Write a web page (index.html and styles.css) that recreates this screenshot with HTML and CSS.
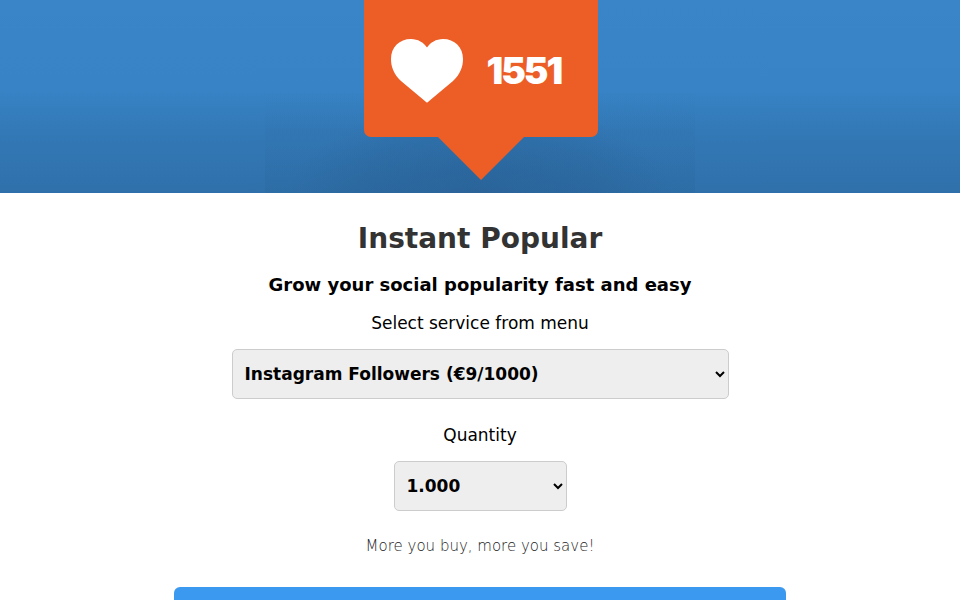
FILE: index.html
```html
<!DOCTYPE html>
<html lang="en">
<head>
<meta charset="utf-8">
<title>Instant Popular</title>
<link rel="stylesheet" href="styles.css">
</head>
<body>
<header class="hero">
  <div class="badge">
    <svg class="heart" viewBox="0 0 72 64" width="72" height="64" aria-hidden="true">
      <path d="M36 63.500 C35.500 63.500 35 63 34.500 62.500 L10 42 C3 35.500 0 28 0 20 C0 8 8.500 0 20 0 C27 0 32.500 3.500 36 8.500 C39.500 3.500 45 0 52 0 C63.500 0 72 8 72 20 C72 28 69 35.500 62 42 L37.500 62.500 C37 63 36.500 63.500 36 63.500 Z" fill="#fff"/>
    </svg>
    <span class="count">1551</span>
  </div>
  <svg class="tail" viewBox="0 0 86 43" width="86" height="43" aria-hidden="true">
    <path d="M0 0 H86 L43 43 Z" fill="#ed5e27"/>
  </svg>
</header>
<main class="content">
  <h1 class="title">Instant Popular</h1>
  <h2 class="subtitle">Grow your social popularity fast and easy</h2>
  <p class="label">Select service from menu</p>
  <select class="picker picker-service" aria-label="Service">
    <option>Instagram Followers (€9/1000)</option>
  </select>
  <p class="label label-quantity">Quantity</p>
  <select class="picker picker-quantity" aria-label="Quantity">
    <option>1.000</option>
    <option>10.000</option>
  </select>
  <p class="note">More you buy, more you save!</p>
  <button class="action" type="button" aria-label="Continue"></button>
</main>
</body>
</html>
```
FILE: styles.css
```css
html, body {
  margin: 0;
  height: 600px;
  overflow: hidden;
  background: #fff;
}
body {
  font-family: "DejaVu Sans", sans-serif;
  color: #000;
}
.hero {
  height: 193px;
  display: flex;
  flex-direction: column;
  align-items: center;
  background:
    radial-gradient(ellipse 190px 90px at 50% 100%, rgba(38, 90, 140, .5) 0%, rgba(38, 90, 140, .25) 65%, rgba(38, 90, 140, 0) 100%),
    linear-gradient(rgba(36, 90, 140, 0), rgba(36, 90, 140, .14)) center bottom / 430px 103px no-repeat,
    linear-gradient(#3985c7 0, #3783c5 90px, #3379b7 130px, #2f70aa 193px);
}
.badge {
  width: 234px;
  height: 137px;
  margin-left: 1px;
  flex: none;
  box-sizing: border-box;
  padding: 4px 0 0 27px;
  display: flex;
  align-items: center;
  gap: 24px;
  background: #ed5e27;
  border-radius: 0 0 7px 7px;
}
.heart { flex: none; }
.count {
  font-family: "Inter", sans-serif;
  font-weight: 900;
  font-size: 37px;
  letter-spacing: -2px;
  color: #fff;
  line-height: 1;
}
.tail {
  display: block;
  flex: none;
  margin-left: 2px;
}
.content {
  width: 612px;
  margin: 0 auto;
  display: flex;
  flex-direction: column;
  align-items: center;
  text-align: center;
}
.title {
  margin: 29px 0 0;
  font-size: 28px;
  line-height: 34px;
  font-weight: 700;
  color: #333;
}
.subtitle {
  margin: 17px 0 0;
  font-size: 18px;
  line-height: 24px;
  font-weight: 700;
}
.label {
  margin: 14px 0 0;
  font-size: 17px;
  line-height: 24px;
}
.label-quantity { margin-top: 24px; }
.picker {
  display: block;
  height: 50px;
  margin-top: 14px;
  padding: 0 8px;
  box-sizing: border-box;
  font-family: inherit;
  font-size: 17px;
  font-weight: 700;
  color: #000;
  background-color: #eee;
  border: 1px solid #ccc;
  border-radius: 5px;
}
.picker-service { width: 497px; }
.picker-quantity { width: 173px; }
.note {
  margin: 25px 0 0;
  font-size: 15px;
  line-height: 20px;
  font-weight: 300;
  color: #222;
}
.action {
  display: block;
  width: 612px;
  height: 60px;
  margin-top: 31px;
  padding: 0;
  border: 0;
  border-radius: 6px;
  background: #3b99f0;
}
```
